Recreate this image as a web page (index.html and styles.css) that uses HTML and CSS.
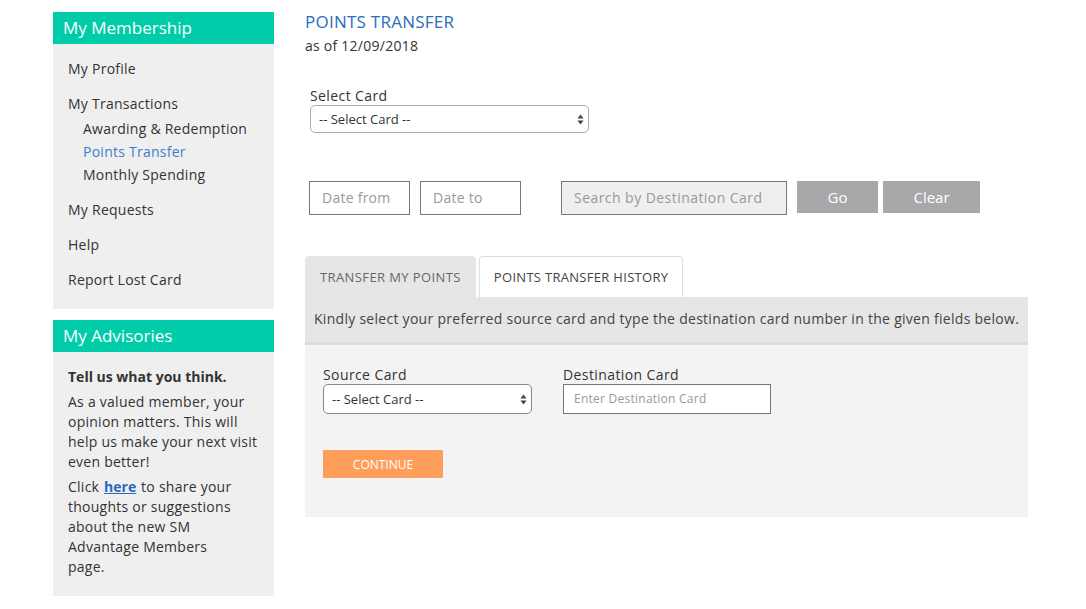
FILE: index.html
```html
<!DOCTYPE html>
<html>
<head>
<meta charset="utf-8">
<link rel="stylesheet" href="styles.css">
</head>
<body>
<div class="page">
  <aside class="sidebar">
    <section class="panel">
      <h2 class="panel-head">My Membership</h2>
      <ul class="menu">
        <li class="menu-item">My Profile</li>
        <li class="menu-item">My Transactions
          <ul class="submenu">
            <li>Awarding &amp; Redemption</li>
            <li class="active">Points Transfer</li>
            <li>Monthly Spending</li>
          </ul>
        </li>
        <li class="menu-item">My Requests</li>
        <li class="menu-item">Help</li>
        <li class="menu-item">Report Lost Card</li>
      </ul>
    </section>
    <section class="panel advisories">
      <h2 class="panel-head">My Advisories</h2>
      <div class="adv-body">
        <p class="adv-title">Tell us what you think.</p>
        <p>As a valued member, your opinion matters. This will help us make your next visit even better!</p>
        <p>Click <a href="#">here</a> to share your thoughts or suggestions about the new SM Advantage Members<br>page.</p>
      </div>
    </section>
  </aside>

  <main class="main">
    <h1 class="title">POINTS TRANSFER</h1>
    <div class="asof">as of 12/09/2018</div>

    <div class="select-card">
      <label class="label">Select Card</label>
      <div class="select wide">
        <span>-- Select Card --</span>
        <svg class="arrows" width="7" height="11" viewBox="0 0 7 11"><path d="M3.5 0.5 L6.5 4.5 L0.5 4.5Z M3.5 10.5 L6.5 6.5 L0.5 6.5Z" fill="#444"/></svg>
      </div>
    </div>

    <div class="filters">
      <div class="field date">Date from</div>
      <div class="field date">Date to</div>
      <div class="field search">Search by Destination Card</div>
      <button class="btn go">Go</button>
      <button class="btn clear">Clear</button>
    </div>

    <div class="tabs">
      <div class="tab active">TRANSFER MY POINTS</div>
      <div class="tab">POINTS TRANSFER HISTORY</div>
    </div>
    <div class="tab-panel">
      <div class="instructions">Kindly select your preferred source card and type the destination card number in the given fields below.</div>
      <div class="form">
        <div class="form-row">
          <div class="form-group">
            <label class="label">Source Card</label>
            <div class="select narrow">
              <span>-- Select Card --</span>
              <svg class="arrows" width="7" height="11" viewBox="0 0 7 11"><path d="M3.5 0.5 L6.5 4.5 L0.5 4.5Z M3.5 10.5 L6.5 6.5 L0.5 6.5Z" fill="#444"/></svg>
            </div>
          </div>
          <div class="form-group">
            <label class="label">Destination Card</label>
            <div class="field dest">Enter Destination Card</div>
          </div>
        </div>
        <button class="btn continue">CONTINUE</button>
      </div>
    </div>
  </main>
</div>
</body>
</html>
```

FILE: styles.css
```css
* { box-sizing: border-box; }
body {
  margin: 0;
  font-family: "Open Sans", "Liberation Sans", sans-serif;
  color: #333;
  background: #fff;
  letter-spacing: 0.25px;
}
.page {
  display: flex;
  gap: 31px;
  padding: 12px 0 0 53px;
}
.sidebar {
  width: 221px;
  flex: none;
  display: flex;
  flex-direction: column;
  gap: 11px;
}
.panel {
  background: #efefef;
}
.panel-head {
  margin: 0;
  height: 32px;
  background: #00cca9;
  color: #fff;
  font-weight: normal;
  font-size: 17px;
  line-height: 32px;
  padding-left: 10px;
  letter-spacing: 0;
}
.menu {
  list-style: none;
  margin: 0;
  padding: 15px 0 19px 15px;
  font-size: 14px;
}
.menu-item {
  line-height: 20px;
  margin-bottom: 15px;
}
.menu-item:last-child { margin-bottom: 0; }
.submenu {
  list-style: none;
  margin: 3px 0 -1px 0;
  padding-left: 15px;
}
.submenu li { line-height: 23px; }
.submenu li.active { color: #3a7fc8; }

.adv-body {
  padding: 15px 15px 19px 15px;
  font-size: 14px;
  line-height: 20px;
}
.adv-body p { margin: 0 0 5px 0; }
.adv-body p:last-child { margin-bottom: 0; }
.adv-title { font-weight: bold; letter-spacing: 0; }
.adv-body a { color: #2a6ab8; font-weight: bold; letter-spacing: 0; padding: 0 1px; }

.main {
  width: 723px;
  flex: none;
}
.title {
  margin: 0;
  font-weight: normal;
  font-size: 17px;
  color: #2a6ebb;
  line-height: 20px;
}
.asof {
  font-size: 14px;
  line-height: 20px;
  margin-top: 4px;
}
.label {
  display: block;
  font-size: 14px;
  line-height: 18px;
  letter-spacing: 0.4px;
}
.select-card {
  margin: 31px 0 0 5px;
}
.select {
  position: relative;
  height: 28px;
  border: 1px solid #aaa;
  border-radius: 5px;
  background: #fff;
  font-size: 13px;
  line-height: 26px;
  padding-left: 8px;
  color: #333;
  letter-spacing: 0;
}
.select.wide { width: 279px; }
.select.narrow { width: 209px; height: 30px; line-height: 28px; border-color: #888; }
.arrows {
  position: absolute;
  right: 4px;
  top: 50%;
  margin-top: -5px;
}
.filters {
  display: flex;
  align-items: flex-start;
  margin: 48px 0 0 4px;
}
.field {
  border: 1px solid #777;
  height: 34px;
  line-height: 32px;
  padding-left: 12px;
  font-size: 14px;
  color: #999;
  background: #fff;
}
.date { width: 101px; margin-right: 10px; }
.date + .date { margin-right: 40px; }
.search { width: 226px; background: #efefef; color: #999; margin-right: 10px; letter-spacing: 0.45px; }
.btn {
  border: none;
  font-family: inherit;
  color: #fff;
  cursor: pointer;
  padding: 0;
}
.go, .clear {
  background: #a7a8aa;
  height: 32px;
  font-size: 15px;
  line-height: 30px;
}
.go { width: 81px; margin-right: 5px; }
.clear { width: 97px; }
.tabs {
  display: flex;
  margin-top: 41px;
  gap: 3px;
}
.tab {
  height: 41px;
  line-height: 40px;
  font-size: 13px;
  padding: 0 14px;
  color: #444;
  border: 1px solid #ddd;
  border-bottom: none;
  border-radius: 4px 4px 0 0;
  background: #fff;
  letter-spacing: 0.3px;
  white-space: nowrap;
}
.tab.active {
  background: #e6e6e6;
  border-color: #e6e6e6;
  color: #666;
  letter-spacing: 0.4px;
}
.tab-panel {
  width: 723px;
  background: #f3f3f3;
}
.instructions {
  background: #e6e6e6;
  height: 48px;
  line-height: 44px;
  font-size: 14px;
  padding-left: 9px;
  border-bottom: 3px solid #dcdcdc;
  color: #444;
  letter-spacing: 0.28px;
}
.form {
  padding: 21px 18px 39px 18px;
}
.form-row {
  display: flex;
  gap: 31px;
}
.dest {
  width: 208px;
  height: 30px;
  line-height: 28px;
  font-size: 12px;
  padding-left: 10px;
}
.continue {
  display: block;
  margin-top: 36px;
  width: 120px;
  height: 28px;
  background: #ff9d5a;
  font-size: 12px;
  letter-spacing: 0;
}
```
